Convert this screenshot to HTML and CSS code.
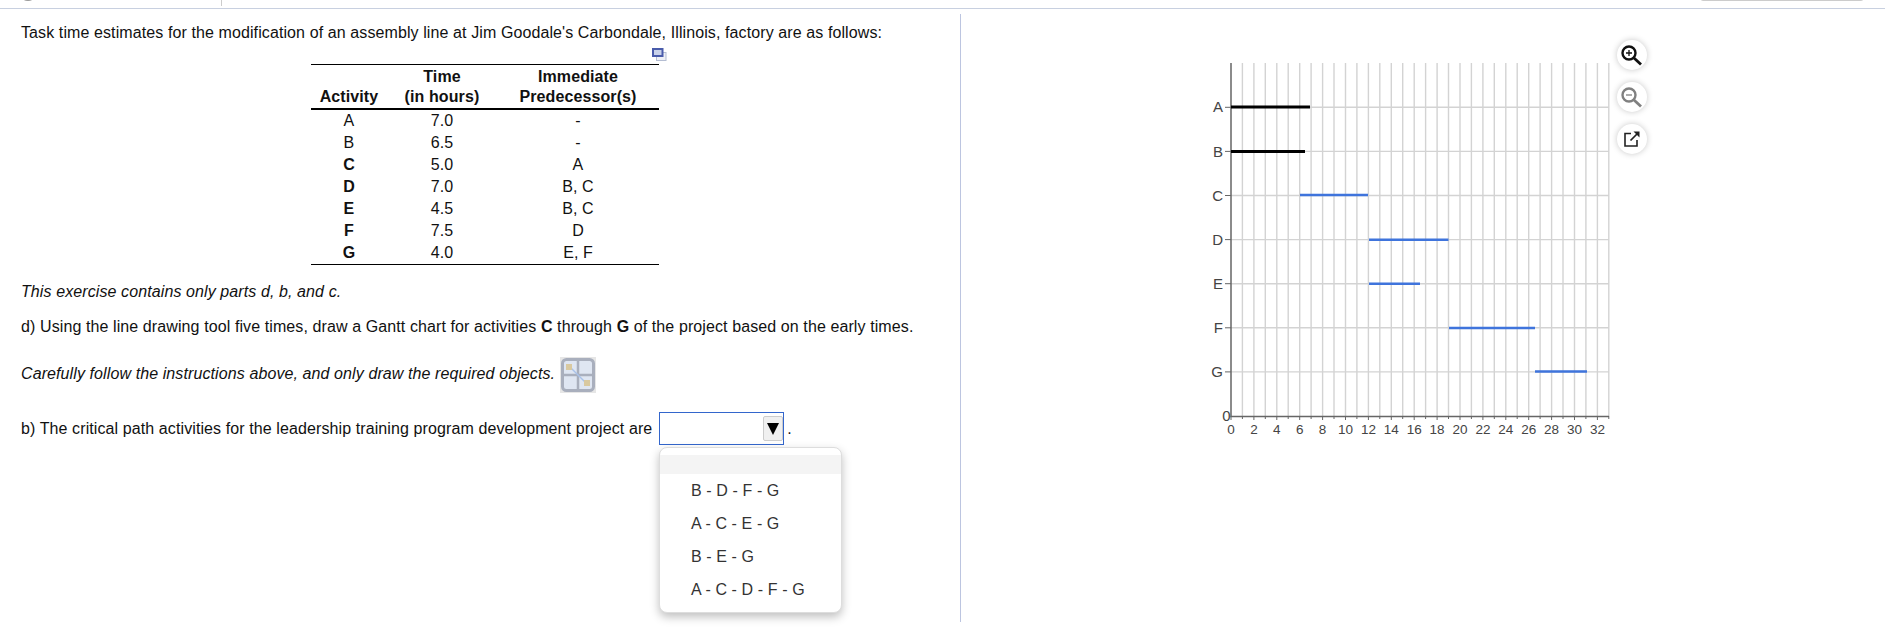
FILE: index.html
```html
<!DOCTYPE html>
<html lang="en">
<head>
<meta charset="utf-8">
<title>Gantt chart exercise</title>
<link rel="stylesheet" href="styles.css">
</head>
<body>
<header class="topbar">
  <span class="top-left-arc"></span>
  <span class="top-left-rule"></span>
  <span class="top-right-btn"></span>
</header>
<main class="panes">
  <section class="left">
    <p class="intro">Task time estimates for the modification of an assembly line at Jim Goodale's Carbondale, Illinois, factory are as follows:</p>
    <div class="table-wrap">
      <svg class="copy-icon" width="15" height="13" viewBox="0 0 15 13"><rect x="4.5" y="4.5" width="9.500" height="8" fill="#eef0f6" stroke="#b4bdd2"/><rect x="1" y="1" width="9.500" height="7" fill="#c9d2ea" stroke="#4a5cab" stroke-width="2"/></svg>
      <table class="data">
        <thead>
          <tr><th class="c1"><br>Activity</th><th class="c2">Time<br>(in hours)</th><th class="c3">Immediate<br>Predecessor(s)</th></tr>
        </thead>
        <tbody>
          <tr><td>A</td><td>7.0</td><td>-</td></tr>
          <tr><td>B</td><td>6.5</td><td>-</td></tr>
          <tr><td><b>C</b></td><td>5.0</td><td>A</td></tr>
          <tr><td><b>D</b></td><td>7.0</td><td>B, C</td></tr>
          <tr><td><b>E</b></td><td>4.5</td><td>B, C</td></tr>
          <tr><td><b>F</b></td><td>7.5</td><td>D</td></tr>
          <tr><td><b>G</b></td><td>4.0</td><td>E, F</td></tr>
        </tbody>
      </table>
    </div>
    <p class="note"><i>This exercise contains only parts d, b, and c.</i></p>
    <p class="part-d">d) Using the line drawing tool five times, draw a Gantt chart for activities <b>C</b> through <b>G</b> of the project based on the early times.</p>
    <div class="tool-line">
      <i class="tool-text">Carefully follow the instructions above, and only draw the required objects.</i>
      <svg class="tool-icon" width="36" height="36" viewBox="0 0 36 36">
        <rect width="36" height="36" fill="#e6e6e6"/>
        <rect x="2.5" y="2.5" width="31" height="31" rx="4" fill="#dfe6f2" stroke="#a9afbd" stroke-width="3"/>
        <path d="M18 3v30M3 18h30" stroke="#a9afbd" stroke-width="2.5"/>
        <path d="M8 8l20 20" stroke="#a9c1e8" stroke-width="1.5"/>
        <rect x="6" y="7" width="6" height="6" fill="#d9c9a0"/>
        <rect x="24" y="23" width="6" height="6" fill="#d9c9a0"/>
      </svg>
    </div>
    <div class="answer-line">
      <span>b) The critical path activities for the leadership training program development project are</span>
      <span class="select"><span class="select-btn"><svg width="12" height="12" viewBox="0 0 12 12"><path d="M0 0h12L6 12z" fill="#000"/></svg></span></span>
      <span class="dot">.</span>
      <ul class="menu">
        <li class="active">&nbsp;</li>
        <li>B - D - F - G</li>
        <li>A - C - E - G</li>
        <li>B - E - G</li>
        <li>A - C - D - F - G</li>
      </ul>
    </div>
  </section>
  <section class="right">
    <svg class="chart" width="420" height="390" viewBox="1200 54 420 390">
      <g class="grid">
        <path d="M1242.400 63V416M1253.900 63V416M1265.300 63V416M1276.800 63V416M1288.200 63V416M1299.700 63V416M1311.100 63V416M1322.600 63V416M1334 63V416M1345.500 63V416M1356.900 63V416M1368.400 63V416M1379.800 63V416M1391.300 63V416M1402.700 63V416M1414.200 63V416M1425.600 63V416M1437.100 63V416M1448.500 63V416M1460 63V416M1471.400 63V416M1482.900 63V416M1494.300 63V416M1505.800 63V416M1517.200 63V416M1528.700 63V416M1540.100 63V416M1551.600 63V416M1563 63V416M1574.500 63V416M1585.900 63V416M1597.400 63V416M1608.800 63V416"/>
        <path d="M1231 107.300H1609M1231 151.400H1609M1231 195.500H1609M1231 239.600H1609M1231 283.700H1609M1231 327.800H1609M1231 371.900H1609"/>
      </g>
      <g class="axis">
        <path d="M1231 63V416.500H1609"/>
        <path class="ticks" d="M1225 107.300H1231M1225 151.400H1231M1225 195.500H1231M1225 239.600H1231M1225 283.700H1231M1225 327.800H1231M1225 371.900H1231"/>
        <path class="ticks" d="M1231 416V420M1242.400 416V419M1253.900 416V420M1265.300 416V419M1276.800 416V420M1288.200 416V419M1299.700 416V420M1311.100 416V419M1322.600 416V420M1334 416V419M1345.500 416V420M1356.900 416V419M1368.400 416V420M1379.800 416V419M1391.300 416V420M1402.700 416V419M1414.200 416V420M1425.600 416V419M1437.100 416V420M1448.500 416V419M1460 416V420M1471.400 416V419M1482.900 416V420M1494.300 416V419M1505.800 416V420M1517.200 416V419M1528.700 416V420M1540.100 416V419M1551.600 416V420M1563 416V419M1574.500 416V420M1585.900 416V419M1597.400 416V420M1608.800 416V419"/>
      </g>
      <g class="ylabels">
        <text x="1223" y="112">A</text><text x="1223" y="157">B</text><text x="1223" y="201">C</text><text x="1223" y="245">D</text><text x="1223" y="289">E</text><text x="1223" y="333">F</text><text x="1223" y="377">G</text><text x="1230.500" y="421">0</text>
      </g>
      <g class="xlabels">
        <text x="1231" y="434">0</text><text x="1253.900" y="434">2</text><text x="1276.800" y="434">4</text><text x="1299.700" y="434">6</text><text x="1322.600" y="434">8</text><text x="1345.500" y="434">10</text><text x="1368.400" y="434">12</text><text x="1391.300" y="434">14</text><text x="1414.200" y="434">16</text><text x="1437.100" y="434">18</text><text x="1460" y="434">20</text><text x="1482.900" y="434">22</text><text x="1505.800" y="434">24</text><text x="1528.700" y="434">26</text><text x="1551.600" y="434">28</text><text x="1574.500" y="434">30</text><text x="1597.400" y="434">32</text>
      </g>
      <path class="bar-black" d="M1231 107H1310M1231 151.600H1305"/>
      <path class="bar-blue" d="M1300 195H1368M1369 239.800H1448.500M1369 283.800H1420M1449 328H1535M1535 371.500H1587"/>
    </svg>
    <div class="tools">
      <button class="tool" aria-label="Zoom in"><svg width="22" height="22" viewBox="0 0 22 22"><circle cx="8" cy="9" r="6.500" fill="none" stroke="#111" stroke-width="2.400"/><path d="M13 14l7 6.500" stroke="#111" stroke-width="2.800"/><path d="M5 9h6M8 6v6" stroke="#111" stroke-width="1.300"/></svg></button>
      <button class="tool" aria-label="Zoom out"><svg width="22" height="22" viewBox="0 0 22 22"><circle cx="8" cy="9" r="6.500" fill="none" stroke="#808080" stroke-width="2.400"/><path d="M13 14l7 6.500" stroke="#808080" stroke-width="2.800"/><path d="M5 9h6" stroke="#808080" stroke-width="1.300"/></svg></button>
      <button class="tool" aria-label="Open in new window"><svg width="18" height="18" viewBox="0 0 18 18"><path d="M8 3.500H2v12.500h12V10" fill="none" stroke="#222" stroke-width="1.600"/><path d="M7.500 10.500L15 3" stroke="#222" stroke-width="1.700"/><path d="M10.500 1.500H16.500V7.500z" fill="#222"/></svg></button>
    </div>
  </section>
</main>
</body>
</html>
```
FILE: styles.css
```css
* { box-sizing: border-box; }
html, body { margin: 0; padding: 0; height: 100%; overflow: hidden; background: #fff; }
body { font-family: "Liberation Sans", Arial, sans-serif; font-size: 16px; letter-spacing: .1px; color: #111; width: 1885px; height: 634px; }

.topbar { position: relative; height: 9px; border-bottom: 1px solid #c8d0e0; }
.top-left-arc { position: absolute; left: 22px; top: -6px; width: 12px; height: 7px; border-radius: 50%; background: #999; }
.top-left-rule { position: absolute; left: 221px; top: 0; width: 1px; height: 6px; background: #ccc; }
.top-right-btn { position: absolute; left: 1700px; top: -8px; width: 164px; height: 9px; border: 1px solid #ccc; border-radius: 3px; }

.panes { display: flex; }
.left { width: 961px; height: 608px; margin-top: 5px; border-right: 1px solid #bcc5e0; padding-left: 21px; flex: none; }
.right { flex: 1; display: flex; align-items: flex-start; padding: 31px 0 0 239px; }

p { margin: 0; }
.intro { line-height: 18px; padding-top: 10px; }

.table-wrap { position: relative; width: 348px; margin: 22px 0 0 290px; }
.copy-icon { position: absolute; left: 341px; top: -16px; }
.data { border-collapse: collapse; width: 348px; table-layout: fixed; border-top: 1px solid #000; border-bottom: 1px solid #000; }
.data th { font-weight: bold; line-height: 20px; padding: 2px 0 1px; border-bottom: 2px solid #000; text-align: center; vertical-align: bottom; }
.data td { height: 22px; padding: 0; text-align: center; line-height: 22px; }
.c1 { width: 76px; }
.c2 { width: 110px; }

.note { margin-top: 18px; line-height: 18px; }
.part-d { margin-top: 17px; line-height: 18px; }
.tool-line { display: flex; align-items: center; gap: 5px; margin-top: 21px; height: 36px; }
.tool-text { padding-bottom: 2px; }
.tool-icon { flex: none; }

.answer-line { position: relative; display: flex; align-items: center; margin-top: 19px; height: 33px; }
.select { display: flex; align-items: center; justify-content: flex-end; width: 125px; height: 33px; margin-left: 7px; border: 1px solid #3366cc; background: #fff; }
.select-btn { display: flex; align-items: center; justify-content: center; width: 20px; height: 25px; border: 1px solid #ccc; border-radius: 2px; background: #f0f0f0; }
.dot { margin-left: 3px; }

.menu { position: absolute; left: 638px; top: 35px; width: 183px; height: 166px; margin: 0; padding: 7px 0 0; list-style: none; background: #fff; border: 1px solid #ddd; border-radius: 8px; box-shadow: 0 4px 10px rgba(0,0,0,.25); color: #333; z-index: 2; }
.menu li { height: 33px; line-height: 33px; padding-left: 31px; }
.menu .active { height: 19px; line-height: 19px; background: #f4f4f4; }

.chart { flex: none; display: block; margin-top: 14px; }
.grid path { fill: none; stroke: #d3d3d3; stroke-width: 1.400; }
.axis path { fill: none; stroke: #666; stroke-width: 1.500; }
.axis .ticks { stroke-width: 1; }
.ylabels text { font-size: 15px; letter-spacing: 0; fill: #444; text-anchor: end; }
.xlabels text { font-size: 13.500px; letter-spacing: 0; fill: #444; text-anchor: middle; }
.bar-black { fill: none; stroke: #000; stroke-width: 3; }
.bar-blue { fill: none; stroke: #3f74dc; stroke-width: 2.500; }

.tools { display: flex; flex-direction: column; gap: 12px; margin-left: -3px; }
.tool { display: flex; align-items: center; justify-content: center; width: 30px; height: 30px; padding: 0; border: 0; border-radius: 50%; background: #fff; box-shadow: 0 0 6px rgba(0,0,0,.22); }
```
